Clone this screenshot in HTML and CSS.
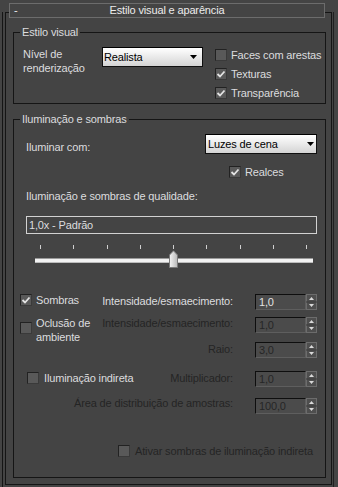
FILE: index.html
```html
<!DOCTYPE html>
<html lang="pt">
<head>
  <meta charset="UTF-8" />
  <meta name="viewport" content="width=device-width, initial-scale=1.0"/>
  <title>Estilo visual e aparência</title>
  <link rel="stylesheet" href="styles.css">
</head>
<body>

  <div class="rollout">
    <div class="frame">

      <div class="head">
        <span class="head-toggle">-</span>
        <span class="head-title">Estilo visual e aparência</span>
      </div>

      <!-- Estilo visual -->
      <fieldset class="group">
        <legend>Estilo visual</legend>
        <div class="visual">
          <div class="level-label">Nível de<br>renderização</div>
          <div class="combo combo-level">
            <span>Realista</span>
            <svg width="7" height="4" viewBox="0 0 7 4"><polygon points="0,0 7,0 3.5,4" fill="#000"/></svg>
          </div>
          <div class="check-list">
            <div class="check"><span class="box"></span>Faces com arestas</div>
            <div class="check"><span class="box"><svg width="10" height="10" viewBox="0 0 10 10"><path d="M1.5 5 L4 7.5 L8.5 2.5" fill="none" stroke="#e4e4e4" stroke-width="1.8"/></svg></span>Texturas</div>
            <div class="check"><span class="box"><svg width="10" height="10" viewBox="0 0 10 10"><path d="M1.5 5 L4 7.5 L8.5 2.5" fill="none" stroke="#e4e4e4" stroke-width="1.8"/></svg></span>Transparência</div>
          </div>
        </div>
      </fieldset>

      <!-- Iluminação e sombras -->
      <fieldset class="group group-light">
        <legend>Iluminação e sombras</legend>
        <div class="light">

          <div class="light-with">
            <span class="light-with-label">Iluminar com:</span>
            <div class="combo combo-scene">
              <span>Luzes de cena</span>
              <svg width="7" height="4" viewBox="0 0 7 4"><polygon points="0,0 7,0 3.5,4" fill="#000"/></svg>
            </div>
          </div>

          <div class="check check-highlights"><span class="box"><svg width="10" height="10" viewBox="0 0 10 10"><path d="M1.5 5 L4 7.5 L8.5 2.5" fill="none" stroke="#e4e4e4" stroke-width="1.8"/></svg></span>Realces</div>

          <div class="quality-label">Iluminação e sombras de qualidade:</div>
          <div class="quality-field">1,0x - Padrão</div>

          <div class="slider">
            <div class="ticks">
              <span></span><span></span><span></span><span></span><span></span>
              <span></span><span></span><span></span><span></span>
            </div>
            <div class="track"></div>
            <svg class="thumb" width="9" height="18" viewBox="0 0 9 18">
              <defs>
                <linearGradient id="thumbFill" x1="0" y1="0" x2="1" y2="0">
                  <stop offset="0" stop-color="#f4f4f4"/>
                  <stop offset="1" stop-color="#b8b8b8"/>
                </linearGradient>
              </defs>
              <path d="M0.5 17.5 V5 L4.5 0.8 L8.5 5 V17.5 Z" fill="url(#thumbFill)" stroke="#7a7a7a"/>
            </svg>
          </div>

          <div class="opts">
            <div class="check opt-shadows"><span class="box"><svg width="10" height="10" viewBox="0 0 10 10"><path d="M1.5 5 L4 7.5 L8.5 2.5" fill="none" stroke="#e4e4e4" stroke-width="1.8"/></svg></span>Sombras</div>
            <div class="opt-label opt-r1">Intensidade/esmaecimento:</div>
            <div class="spin">
              <span class="spin-field">1,0</span>
              <svg width="11" height="16" viewBox="0 0 11 16"><rect x="0.5" y="0.5" width="10" height="15" fill="#4e4e4e" stroke="#6c6c6c"/><line x1="0" y1="8" x2="11" y2="8" stroke="#3a3a3a"/><polygon points="3,6 8,6 5.5,3" fill="#dadada"/><polygon points="3,10 8,10 5.5,13" fill="#dadada"/></svg>
            </div>

            <div class="check opt-occlusion"><span class="box"></span><span>Oclusão de<br>ambiente</span></div>
            <div class="opt-label off opt-r2">Intensidade/esmaecimento:</div>
            <div class="spin">
              <span class="spin-field off">1,0</span>
              <svg width="11" height="16" viewBox="0 0 11 16"><rect x="0.5" y="0.5" width="10" height="15" fill="#4e4e4e" stroke="#6c6c6c"/><line x1="0" y1="8" x2="11" y2="8" stroke="#3a3a3a"/><polygon points="3,6 8,6 5.5,3" fill="#dadada"/><polygon points="3,10 8,10 5.5,13" fill="#dadada"/></svg>
            </div>

            <div class="opt-label off opt-r3">Raio:</div>
            <div class="spin">
              <span class="spin-field off">3,0</span>
              <svg width="11" height="16" viewBox="0 0 11 16"><rect x="0.5" y="0.5" width="10" height="15" fill="#4e4e4e" stroke="#6c6c6c"/><line x1="0" y1="8" x2="11" y2="8" stroke="#3a3a3a"/><polygon points="3,6 8,6 5.5,3" fill="#dadada"/><polygon points="3,10 8,10 5.5,13" fill="#dadada"/></svg>
            </div>

            <div class="check opt-indirect"><span class="box"></span>Iluminação indireta</div>
            <div class="opt-label off opt-r4">Multiplicador:</div>
            <div class="spin">
              <span class="spin-field off">1,0</span>
              <svg width="11" height="16" viewBox="0 0 11 16"><rect x="0.5" y="0.5" width="10" height="15" fill="#4e4e4e" stroke="#6c6c6c"/><line x1="0" y1="8" x2="11" y2="8" stroke="#3a3a3a"/><polygon points="3,6 8,6 5.5,3" fill="#dadada"/><polygon points="3,10 8,10 5.5,13" fill="#dadada"/></svg>
            </div>

            <div class="opt-label off opt-r5">Área de distribuição de amostras:</div>
            <div class="spin">
              <span class="spin-field off">100,0</span>
              <svg width="11" height="16" viewBox="0 0 11 16"><rect x="0.5" y="0.5" width="10" height="15" fill="#4e4e4e" stroke="#6c6c6c"/><line x1="0" y1="8" x2="11" y2="8" stroke="#3a3a3a"/><polygon points="3,6 8,6 5.5,3" fill="#dadada"/><polygon points="3,10 8,10 5.5,13" fill="#dadada"/></svg>
            </div>
          </div>

          <div class="check check-gi off"><span class="box"></span>Ativar sombras de iluminação indireta</div>

        </div>
      </fieldset>

    </div>
  </div>

</body>
</html>
```

FILE: styles.css
```css
body {
  margin: 0;
  width: 338px;
  height: 487px;
  overflow: hidden;
  background: #444444;
  color: #dcdcdf;
  font-family: 'Liberation Sans', Arial, sans-serif;
  font-size: 11px;
  letter-spacing: -0.15px;
}

.rollout {
  box-sizing: border-box;
  width: 332px;
  min-height: 475px;
  margin: 12px 0 0 2px;
  padding: 0 1px 0 2px;
  border-left: 1px solid #151515;
  border-right: 1px solid #202020;
}

.frame {
  border: 1px solid #151515;
}

.head {
  display: grid;
  grid-template-columns: 1fr auto 1fr;
  margin: -10px 6px 0 3px;
  border: 1px solid #6c6c6c;
  background: #444444;
  line-height: 13px;
  color: #ececec;
}

.head-toggle {
  padding-left: 4px;
}

.head-title {
  grid-column: 2;
}

/* group boxes */
.group {
  min-width: 0;
  margin: 8px 5px 0 7px;
  padding: 0;
  border: 1px solid #151515;
}

.group legend {
  margin-left: 6px;
  padding: 0 2px;
  line-height: 13px;
}

.group-light {
  margin: 9px 5px 6px 7px;
}

/* checkboxes */
.check {
  display: flex;
  align-items: center;
  gap: 4px;
  line-height: 14px;
  white-space: nowrap;
}

.box {
  box-sizing: border-box;
  display: flex;
  align-items: center;
  justify-content: center;
  width: 12px;
  height: 12px;
  flex: none;
  border: 1px solid #222222;
  border-right-color: #3a3a3a;
  border-bottom-color: #3a3a3a;
  background: #595959;
}

.off {
  color: #242424;
}

/* combo boxes */
.combo {
  box-sizing: border-box;
  display: flex;
  align-items: center;
  justify-content: space-between;
  height: 20px;
  border: 1px solid #101010;
  border-top-color: #000;
  background: linear-gradient(#ffffff, #d4d4d4);
  color: #000;
}

.combo-level {
  margin-top: 2px;
  padding: 0 5px 0 1px;
}

.combo-scene {
  width: 112px;
  padding: 0 2px 0 2px;
}

/* estilo visual */
.visual {
  display: grid;
  grid-template-columns: 79px 101px 1fr;
  align-items: start;
  padding: 6px 0 1px 9px;
}

.level-label {
  margin-top: 2px;
  line-height: 14px;
}

.check-list {
  margin-left: 12px;
}

.check-list .check {
  height: 19px;
}

/* iluminação */
.light {
  padding: 0 8px 19px 12px;
}

.light-with {
  display: flex;
  align-items: flex-start;
  justify-content: space-between;
  margin-top: 8px;
}

.light-with-label {
  margin-top: 6px;
  line-height: 14px;
}

.check-highlights {
  margin-top: 11px;
  padding-left: 203px;
}

.quality-label {
  margin-top: 10px;
  line-height: 14px;
}

.quality-field {
  box-sizing: border-box;
  height: 18px;
  margin-top: 13px;
  padding-left: 2px;
  border: 1px solid #d2d2d2;
  line-height: 16px;
}

.slider {
  position: relative;
  margin-top: 11px;
}

.ticks {
  display: flex;
  justify-content: space-between;
  margin: 0 10px 0 14px;
}

.ticks span {
  width: 1px;
  height: 4px;
  background: #d0d0d0;
}

.track {
  height: 5px;
  margin: 9px 4px 0 9px;
  background: linear-gradient(#9a9a9a 0 1px, #f2f2f2 1px 4px, #bcbcbc 4px);
}

.thumb {
  position: absolute;
  left: 143px;
  top: 5px;
}

/* spinner rows */
.opts {
  display: grid;
  grid-template-columns: 76px 131px 1fr;
  grid-template-rows: 23px 25px 29px 27px 16px;
  align-items: start;
  margin-top: 31px;
}

.opt-label {
  grid-column: 2;
  line-height: 16px;
  text-align: right;
  white-space: nowrap;
}

.opt-r1 { margin-top: -1px; }
.opt-r2 { margin-top: -2px; }
.opt-r3 { margin-top: -1px; }
.opt-r4 { margin-top: -1px; }
.opt-r5 { grid-column: 1 / 3; margin-top: -3px; }

.spin {
  grid-column: 3;
  justify-self: end;
  display: flex;
  width: 62px;
  height: 16px;
}

.spin-field {
  box-sizing: border-box;
  width: 51px;
  padding-left: 3px;
  border: 1px solid #0e0e0e;
  border-right-color: #5e5e5e;
  border-bottom-color: #5e5e5e;
  background: #4b4b4b;
  line-height: 14px;
  color: #e2e2e2;
}

.spin-field.off {
  color: #262626;
}

.opt-shadows {
  grid-column: 1;
  margin: -2px 0 0 -6px;
  line-height: 16px;
}

.opt-occlusion {
  grid-column: 1;
  grid-row: 2 / span 2;
  align-items: flex-start;
  margin: -1px 0 0 -6px;
}

.opt-occlusion .box {
  margin-top: 6px;
}

.opt-indirect {
  grid-column: 1;
  grid-row: 4;
  gap: 5px;
  margin: -1px 0 0 1px;
  line-height: 16px;
}

.check-gi {
  gap: 5px;
  margin-top: 30px;
  padding-left: 92px;
}
```
